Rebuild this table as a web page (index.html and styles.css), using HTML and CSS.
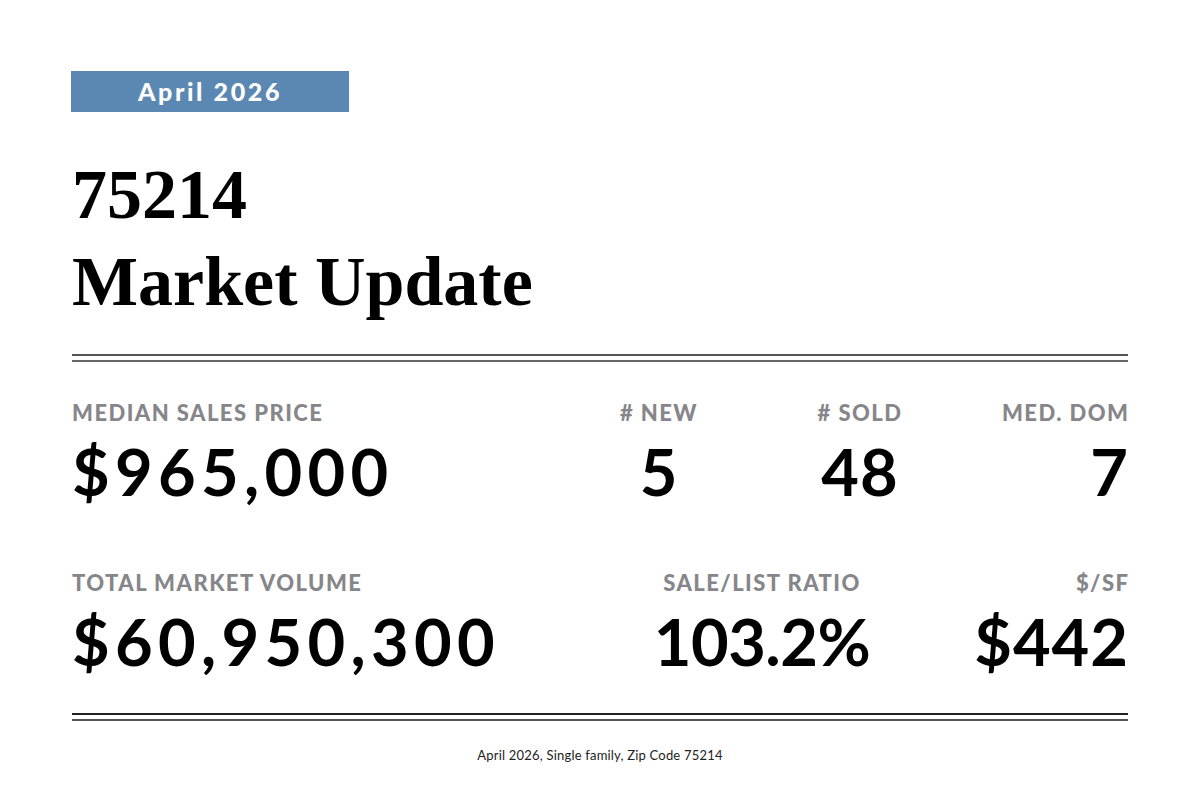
FILE: index.html
```html
<!DOCTYPE html>
<html lang="en">
<head>
<meta charset="utf-8">
<title>75214 Market Update</title>
<link rel="stylesheet" href="styles.css">
</head>
<body>
<main class="page">
  <div class="badge">April 2026</div>
  <h1 class="title">75214<br>Market Update</h1>
  <div class="rule rule-top"></div>
  <section class="row row-one">
    <div class="stat left">
      <div class="label">MEDIAN SALES PRICE</div>
      <div class="value wide">$965,000</div>
    </div>
    <div class="stat center">
      <div class="label"># NEW</div>
      <div class="value">5</div>
    </div>
    <div class="stat center">
      <div class="label"># SOLD</div>
      <div class="value">48</div>
    </div>
    <div class="stat right">
      <div class="label">MED. DOM</div>
      <div class="value">7</div>
    </div>
  </section>
  <section class="row row-two">
    <div class="stat left">
      <div class="label">TOTAL MARKET VOLUME</div>
      <div class="value wide">$60,950,300</div>
    </div>
    <div class="stat center">
      <div class="label">SALE/LIST RATIO</div>
      <div class="value tight">103.2%</div>
    </div>
    <div class="stat right">
      <div class="label">$/SF</div>
      <div class="value">$442</div>
    </div>
  </section>
  <div class="rule rule-bottom"></div>
  <footer class="footer">April 2026, Single family, Zip Code 75214</footer>
</main>
</body>
</html>
```
FILE: styles.css
```css
html, body {
  margin: 0;
  padding: 0;
  background: #ffffff;
}
.page {
  width: 1056px;
  padding: 71px 72px 0 72px;
  font-family: "Lato", "Liberation Sans", sans-serif;
  color: #000;
}
.badge {
  width: 278px;
  height: 41px;
  margin-left: -1px;
  background: #5b88b2;
  color: #fff;
  font-weight: 900;
  font-size: 25px;
  letter-spacing: 2.6px;
  line-height: 41px;
  text-align: center;
}
.title {
  margin: 39px 0 0 0;
  font-family: "Liberation Serif", "DejaVu Serif", serif;
  font-weight: 700;
  font-size: 70px;
  line-height: 87px;
  letter-spacing: 0;
}
.rule {
  height: 4px;
}
.rule-top {
  margin-top: 29px;
  border-top: 2px solid #555;
  border-bottom: 2px solid #666;
}
.rule-bottom {
  margin-top: 39px;
  border-top: 2px solid #222;
  border-bottom: 2px solid #555;
}
.row {
  display: grid;
}
.row-one {
  margin-top: 40px;
  grid-template-columns: 1fr 170px 170px 152px;
  column-gap: 31px;
}
.row-two {
  margin-top: 68px;
  grid-template-columns: 1fr 260px 236px;
}
.stat.left { text-align: left; }
.stat.center { text-align: center; }
.stat.right { text-align: right; }
.label {
  font-size: 22px;
  line-height: 22px;
  font-weight: 900;
  color: #86868a;
  letter-spacing: 1.45px;
  white-space: nowrap;
}
.right .label {
  margin-right: -1.45px;
}
.value {
  margin-top: 15px;
  font-size: 65px;
  line-height: 65px;
  font-weight: 700;
  letter-spacing: 1px;
  white-space: nowrap;
}
.right .value {
  margin-right: -1px;
}
.value.wide {
  letter-spacing: 5.3px;
}
.value.tight {
  letter-spacing: -0.5px;
}
.footer {
  margin-top: 26px;
  text-align: center;
  font-size: 13px;
  line-height: 16px;
  letter-spacing: 0.2px;
  color: #222;
}
```
